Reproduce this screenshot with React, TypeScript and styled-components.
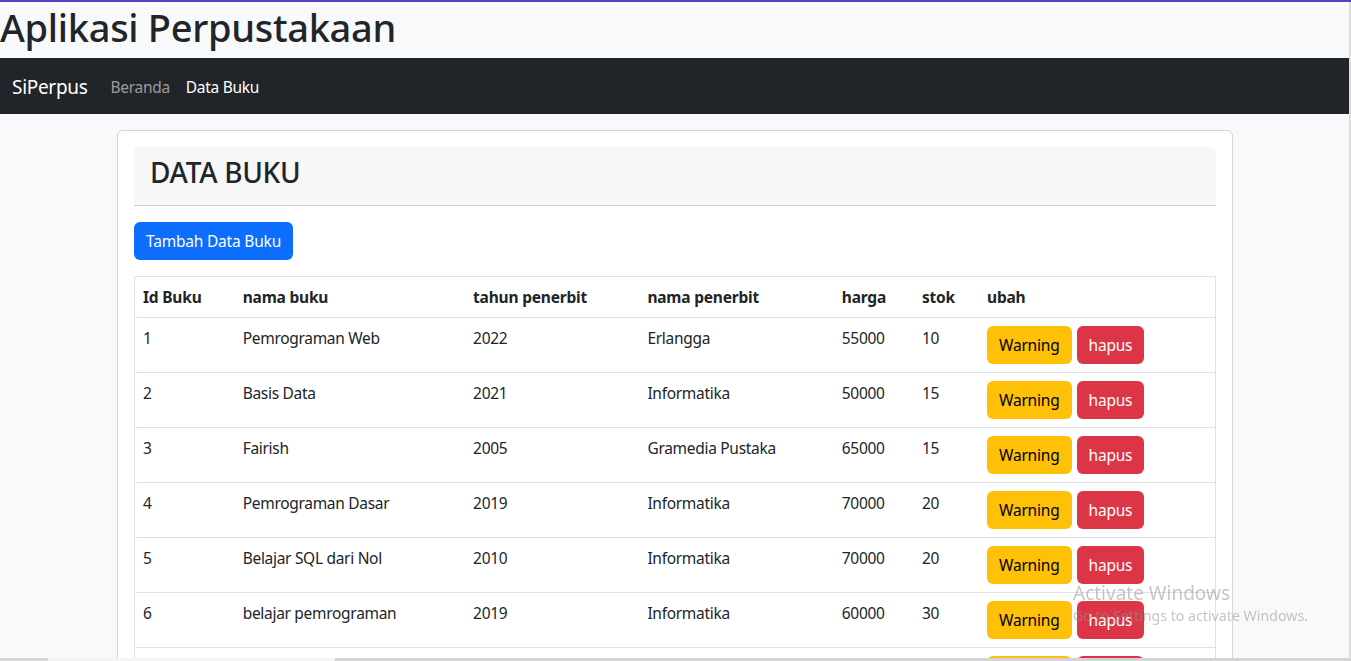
import React from 'react';
import styled, { createGlobalStyle } from 'styled-components';

interface Book {
  id: number;
  name: string;
  year: string;
  publisher: string;
  price: string;
  stock: string;
}

const books: Book[] = [
  {id: 1, name: 'Pemrograman Web', year: '2022', publisher: 'Erlangga', price: '55000', stock: '10'},
  {id: 2, name: 'Basis Data', year: '2021', publisher: 'Informatika', price: '50000', stock: '15'},
  {id: 3, name: 'Fairish', year: '2005', publisher: 'Gramedia Pustaka', price: '65000', stock: '15'},
  {id: 4, name: 'Pemrograman Dasar', year: '2019', publisher: 'Informatika', price: '70000', stock: '20'},
  {id: 5, name: 'Belajar SQL dari Nol', year: '2010', publisher: 'Informatika', price: '70000', stock: '20'},
  {id: 6, name: 'belajar pemrograman', year: '2019', publisher: 'Informatika', price: '60000', stock: '30'},
  {id: 7, name: 'Algoritma Dasar', year: '2018', publisher: 'Informatika', price: '45000', stock: '12'},
];

const columns = [
  {label: 'Id Buku', width: 100},
  {label: 'nama buku', width: 230},
  {label: 'tahun penerbit', width: 174},
  {label: 'nama penerbit', width: 194},
  {label: 'harga', width: 80},
  {label: 'stok', width: 65},
  {label: 'ubah', width: 236},
];

export default function App() {
  return (
    <>
      <GlobalStyle/>
      <Title>Aplikasi Perpustakaan</Title>
      <Navbar>
        <Brand>SiPerpus</Brand>
        <NavLink>Beranda</NavLink>
        <NavLink active>Data Buku</NavLink>
      </Navbar>
      <Container>
        <Card>
          <CardHeader>
            <HeaderTitle>DATA BUKU</HeaderTitle>
          </CardHeader>
          <Button variant="primary">Tambah Data Buku</Button>
          <Table>
            <colgroup>
              {columns.map(c => <col key={c.label} style={{width: c.width}}/>)}
            </colgroup>
            <thead>
              <tr>
                {columns.map(c => <Th key={c.label}>{c.label}</Th>)}
              </tr>
            </thead>
            <tbody>
              {books.map(b => (
                <tr key={b.id}>
                  <Td>{b.id}</Td>
                  <Td>{b.name}</Td>
                  <Td>{b.year}</Td>
                  <Td>{b.publisher}</Td>
                  <Td>{b.price}</Td>
                  <Td>{b.stock}</Td>
                  <Td>
                    <Actions>
                      <Button variant="warning">Warning</Button>
                      <Button variant="danger">hapus</Button>
                    </Actions>
                  </Td>
                </tr>
              ))}
            </tbody>
          </Table>
        </Card>
      </Container>
      <Watermark>
        <WatermarkTitle>Activate Windows</WatermarkTitle>
        <WatermarkText>Go to Settings to activate Windows.</WatermarkText>
      </Watermark>
      <ScrollRight/>
      <ScrollBottom>
        <ScrollThumb/>
      </ScrollBottom>
    </>
  );
}

const GlobalStyle = createGlobalStyle`
  * { box-sizing: border-box; }
  body {
    margin: 0;
    overflow: hidden;
    background: #f8f9fa;
    color: #212529;
    font-family: "Noto Sans", "Open Sans", sans-serif;
    font-size: 16px;
    line-height: 1.5;
    border-top: 2px solid #5640c2;
  }
`;

const Title = styled.h1`
  margin: 0 0 8px;
  font-size: 38px;
  font-weight: 500;
  line-height: 50px;
  height: 48px;
  letter-spacing: -0.3px;
`;

const Navbar = styled.nav`
  width: 1349px;
  height: 56px;
  background: #212529;
  display: flex;
  align-items: center;
  padding: 3px 12px 0;
`;

const Brand = styled.span`
  color: #fff;
  font-size: 19px;
  margin-right: 15px;
  letter-spacing: -0.3px;
`;

const NavLink = styled.span<{ active?: boolean }>`
  padding: 8px;
  font-size: 15.5px;
  color: ${p => p.active ? '#fff' : 'rgba(255,255,255,0.55)'};
  letter-spacing: -0.3px;
`;

const Container = styled.div`
  width: 1116px;
  margin: 16px 0 0 117px;
`;

const Card = styled.div`
  background: #fff;
  border: 1px solid #d3d4d5;
  border-radius: 6px;
  padding: 16px;
  display: flex;
  flex-direction: column;
  align-items: flex-start;
`;

const CardHeader = styled.div`
  align-self: stretch;
  height: 59px;
  background: #f7f7f7;
  border-bottom: 1px solid #cfcfcf;
  border-radius: 5px 5px 0 0;
  padding: 0 16px;
  display: flex;
  align-items: center;
`;

const HeaderTitle = styled.h3`
  margin: 0 0 8px;
  font-size: 28px;
  font-weight: 500;
  letter-spacing: -0.3px;
`;

const buttonColors = {
  primary: {bg: '#0d6efd', fg: '#fff'},
  warning: {bg: '#ffc107', fg: '#000'},
  danger: {bg: '#dc3545', fg: '#fff'},
};

const Button = styled.button<{ variant: keyof typeof buttonColors }>`
  margin-top: ${p => p.variant === 'primary' ? '16px' : '0'};
  height: 38px;
  padding: 0 12px;
  border: none;
  border-radius: 6px;
  font-family: inherit;
  font-size: 15.5px;
  letter-spacing: -0.2px;
  background: ${p => buttonColors[p.variant].bg};
  color: ${p => buttonColors[p.variant].fg};
`;

const Table = styled.table`
  margin-top: 16px;
  width: 1082px;
  table-layout: fixed;
  border-collapse: collapse;
  border: 1px solid #dee2e6;
  font-size: 15.5px;
`;

const Th = styled.th`
  text-align: left;
  font-weight: 700;
  padding: 9px 8px 7px;
  height: 41px;
  border-bottom: 1px solid #dee2e6;
  letter-spacing: -0.2px;
`;

const Td = styled.td`
  vertical-align: top;
  padding: 9px 8px 7px;
  height: 55px;
  border-bottom: 1px solid #dee2e6;
  letter-spacing: -0.3px;
  white-space: nowrap;
`;

const Actions = styled.div`
  display: flex;
  gap: 5px;
  margin-top: -1px;
`;

const Watermark = styled.div`
  position: fixed;
  left: 1073px;
  top: 580px;
  color: rgba(150, 150, 150, 0.55);
  pointer-events: none;
`;

const WatermarkTitle = styled.div`
  font-size: 19px;
  line-height: 26px;
`;

const WatermarkText = styled.div`
  font-size: 14.2px;
  line-height: 20px;
`;

const ScrollRight = styled.div`
  position: fixed;
  top: 2px;
  right: 0;
  width: 2px;
  bottom: 0;
  background: #dcdcdc;
`;

const ScrollBottom = styled.div`
  position: fixed;
  left: 0;
  right: 0;
  bottom: 0;
  height: 3px;
  background: #d4d4d4;
`;

const ScrollThumb = styled.div`
  margin-left: 48px;
  width: 287px;
  height: 100%;
  background: #f4f4f4;
`;
